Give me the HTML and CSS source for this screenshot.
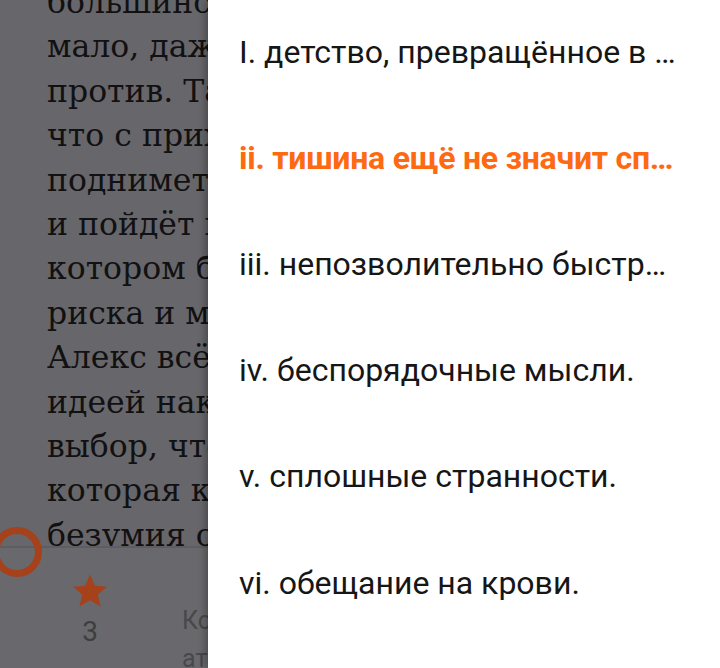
FILE: index.html
```html
<!DOCTYPE html>
<html lang="ru">
<head>
<meta charset="utf-8">
<title>Чтение</title>
<link rel="stylesheet" href="styles.css">
</head>
<body>
<div class="screen">
  <main class="reader">
    <article class="page">
      <p class="prose">большинство из них не думали о том, как<br>мало, даже ничтожно мало, было тех, кто<br>против. Так или иначе, он понимал,<br>что с приходом нового дня никто не<br>поднимет голову и не скажет ни слова,<br>и пойдёт по тому пути, на<br>котором больше не будет места для<br>риска и мечты о свободе.<br>Алекс всё ещё не мог смириться с<br>идеей накануне принятого решения,<br>выбор, что был сделан, оставил лишь<br>которая казалась ему гранью<br>безумия с самого начала.</p>
    </article>
    <footer class="toolbar">
      <div class="tool tool-vote">
        <svg class="star" viewBox="0 0 24 24" width="40" height="38" aria-hidden="true"><path d="M12 1.6l3.1 7.1 7.6.6-5.8 5 1.8 7.5L12 17.8l-6.7 4 1.8-7.5-5.8-5 7.6-.6z"/></svg>
        <span class="count">3</span>
      </div>
      <div class="tool tool-comments">Комментарии<br>атмосферы</div>
    </footer>
    <div class="fab"></div>
  </main>
  <nav class="drawer">
    <ul class="chapters">
      <li class="chapter">I. детство, превращённое в …</li>
      <li class="chapter current">ii. тишина ещё не значит сп…</li>
      <li class="chapter">iii. непозволительно быстр…</li>
      <li class="chapter">iv. беспорядочные мысли.</li>
      <li class="chapter">v. сплошные странности.</li>
      <li class="chapter">vi. обещание на крови.</li>
    </ul>
  </nav>
</div>
</body>
</html>
```

FILE: styles.css
```css
* { box-sizing: border-box; }
html, body { margin: 0; padding: 0; }
body { width: 720px; height: 668px; overflow: hidden; background: #67666a; }

.screen { position: relative; width: 720px; height: 668px; overflow: hidden; }

.reader {
  display: grid;
  grid-template-rows: 546px 1fr;
  height: 668px;
  background: #67666a;
}

.page { overflow: hidden; padding-left: 47px; }
.prose {
  margin: -20px 0 0 0;
  font-family: "DejaVu Serif", "Liberation Serif", serif;
  font-size: 31.5px;
  line-height: 44.4px;
  color: #111112;
  white-space: nowrap;
}

.toolbar {
  display: flex;
  align-items: flex-start;
  background: #69686c;
  border-top: 2px solid #5e5d61;
  font-family: Roboto, "Noto Sans", sans-serif;
}
.tool-vote {
  width: 80px;
  margin-left: 50px;
  padding-top: 24px;
  display: flex;
  flex-direction: column;
  align-items: center;
  gap: 5px;
}
.star { fill: #a5411b; display: block; }
.count { font-size: 28px; line-height: 33px; color: #3e3e41; }
.tool-comments {
  margin-left: 52px;
  padding-top: 54px;
  font-size: 25px;
  line-height: 38px;
  color: #48484b;
  white-space: nowrap;
}

.fab {
  position: absolute;
  left: -8.5px;
  top: 527px;
  width: 50px;
  height: 50px;
  border-radius: 50%;
  border: 7.5px solid #a5411b;
}

.drawer {
  position: absolute;
  top: 0;
  right: 0;
  width: 512px;
  height: 668px;
  background: #ffffff;
  box-shadow: -3px 0 7px rgba(0, 0, 0, 0.28);
}
.chapters { list-style: none; margin: 0; padding: 0; }
.chapter {
  height: 106.2px;
  display: flex;
  align-items: center;
  padding: 0 20px 3px 31px;
  font-family: Roboto, "Noto Sans", sans-serif;
  font-size: 32px;
  color: #161616;
  white-space: nowrap;
  overflow: hidden;
}
.chapter.current { color: #fd6a12; font-weight: 700; letter-spacing: -0.25px; }
```
